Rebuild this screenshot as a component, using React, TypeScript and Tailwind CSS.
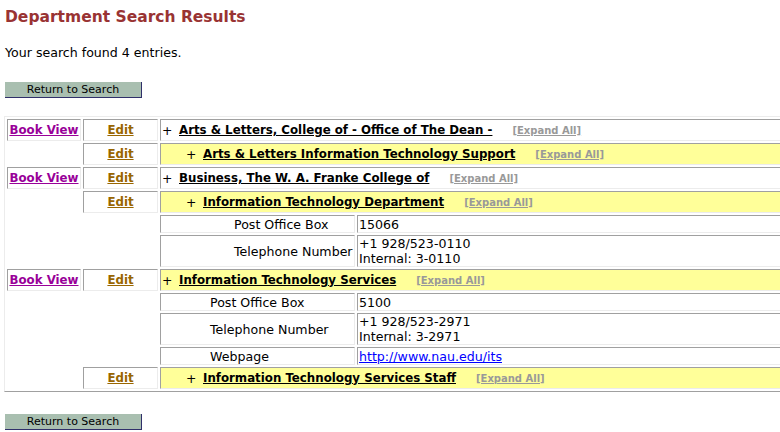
import React from "react";

const cell =
  "border border-t-[#a0a0a0] border-l-[#a0a0a0] border-b-[#ececec] border-r-[#ececec]";

function BookCell({ show }: { show: boolean }) {
  if (!show) return <div className="w-[74px] shrink-0" />;
  return (
    <div className={`${cell} w-[74px] shrink-0 flex items-center justify-center`}>
      <a className="font-bold text-[11.8px] text-[#990099] underline whitespace-nowrap">Book View</a>
    </div>
  );
}

function EditCell({ show }: { show: boolean }) {
  if (!show) return <div className="w-[75px] shrink-0" />;
  return (
    <div className={`${cell} w-[75px] shrink-0 flex items-center justify-center`}>
      <a className="font-bold text-[11.8px] text-[#996600] underline">Edit</a>
    </div>
  );
}

function MainRow({
  book,
  yellow,
  indent,
  title,
}: {
  book: boolean;
  yellow: boolean;
  indent: boolean;
  title: string;
}) {
  return (
    <div className="flex gap-[2px] h-[22px]">
      <BookCell show={book} />
      <EditCell show={true} />
      <div
        className={`${cell} flex-1 flex items-center whitespace-nowrap ${
          yellow ? "bg-[#ffff99]" : "bg-white"
        } ${indent ? "pl-[25px]" : "pl-[1px]"}`}
      >
        <span className="inline-block w-[17px] text-[12.4px]">+</span>
        <a className="font-bold text-[11.8px] text-black underline">{title}</a>
        <a className="ml-[20px] font-bold text-[10px] text-[#999999] underline">[Expand All]</a>
      </div>
    </div>
  );
}

function InfoRow({
  label,
  children,
  h,
  pad,
}: {
  label: string;
  children: React.ReactNode;
  h: string;
  pad: string;
}) {
  return (
    <div className={`flex gap-[2px] ${h}`}>
      <div className="w-[74px] shrink-0" />
      <div className="w-[75px] shrink-0" />
      <div className={`${cell} w-[195px] shrink-0 flex items-center ${pad}`}>{label}</div>
      <div className={`${cell} flex-1 flex items-center pl-[1px]`}>
        <div>{children}</div>
      </div>
    </div>
  );
}

function ReturnButton() {
  return (
    <button className="w-[137px] h-[16px] bg-[#a9bfb0] border-r border-b border-r-[#30306a] border-b-[#30306a] text-[11px] leading-[15px] text-black text-center">
      Return to Search
    </button>
  );
}

export default function App() {
  return (
    <div
      className="w-[780px] h-[432px] overflow-hidden bg-white text-black text-[12.6px] leading-[15px]"
      style={{ fontFamily: '"DejaVu Sans", Verdana, sans-serif' }}
    >
      <div className="pl-[5px] pt-[8px] flex flex-col items-start">
        <h1 className="text-[15.5px] leading-[18px] font-bold text-[#993333]">
          Department Search Results
        </h1>
        <p className="mt-[19px]">Your search found 4 entries.</p>
        <div className="mt-[21px]">
          <ReturnButton />
        </div>
      </div>

      <div className="ml-[4px] mt-[18px] w-[820px] border border-t-[#ececec] border-l-[#ececec] border-b-[#a0a0a0] border-r-[#a0a0a0] p-[2px] flex flex-col gap-[2px]">
        <MainRow book yellow={false} indent={false} title="Arts & Letters, College of - Office of The Dean -" />
        <MainRow book={false} yellow indent title="Arts & Letters Information Technology Support" />
        <MainRow book yellow={false} indent={false} title="Business, The W. A. Franke College of" />
        <MainRow book={false} yellow indent title="Information Technology Department" />
        <InfoRow label="Post Office Box" h="h-[18px]" pad="pl-[73px]">
          15066
        </InfoRow>
        <InfoRow label="Telephone Number" h="h-[32px]" pad="pl-[73px]">
          +1 928/523-0110
          <br />
          Internal: 3-0110
        </InfoRow>
        <MainRow book yellow indent={false} title="Information Technology Services" />
        <InfoRow label="Post Office Box" h="h-[18px]" pad="pl-[49px]">
          5100
        </InfoRow>
        <InfoRow label="Telephone Number" h="h-[32px]" pad="pl-[49px]">
          +1 928/523-2971
          <br />
          Internal: 3-2971
        </InfoRow>
        <InfoRow label="Webpage" h="h-[18px]" pad="pl-[49px]">
          <a className="text-[#0000ff] underline">http://www.nau.edu/its</a>
        </InfoRow>
        <MainRow book={false} yellow indent title="Information Technology Services Staff" />
      </div>

      <div className="pl-[5px] mt-[21px]">
        <ReturnButton />
      </div>
    </div>
  );
}
